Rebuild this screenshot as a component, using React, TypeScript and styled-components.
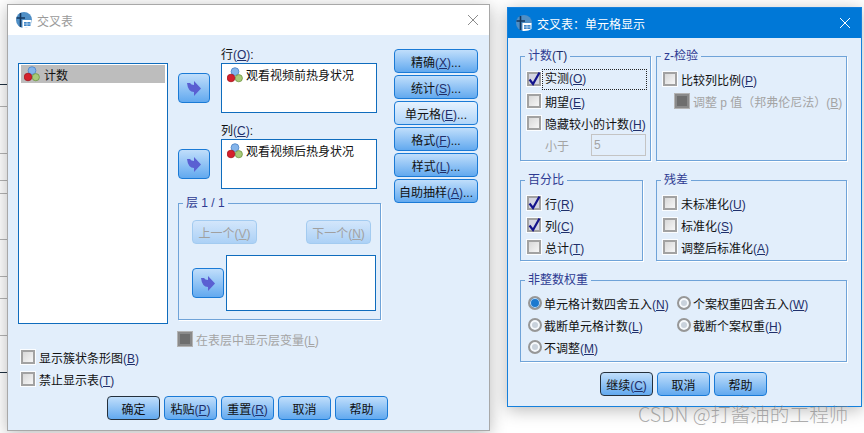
import React from 'react';
import styled, {createGlobalStyle} from 'styled-components';

const Global = createGlobalStyle`
  html, body {
    margin: 0;
    padding: 0;
    background: #fff;
  }
  body {
    font-family: "Liberation Sans", "Noto Sans CJK SC", sans-serif;
    font-size: 12px;
    color: #111;
  }
`;

const PANEL = '#e2eefb';

const Desktop = styled.div`
  position: relative;
  width: 864px;
  height: 433px;
  overflow: hidden;
  background-color: #fff;
`;

// the sheet behind the dialogs, only its left edge shows
const SheetEdge = styled.div`
  position: absolute;
  left: 0;
  top: 0;
  width: 8px;
  height: 433px;
  background-repeat: no-repeat;
  background-size: 8px 1px;
  background-image:
    linear-gradient(#1f3242, #1f3242), linear-gradient(#b4b4b4, #b4b4b4),
    linear-gradient(#b4b4b4, #b4b4b4), linear-gradient(#b4b4b4, #b4b4b4),
    linear-gradient(#b4b4b4, #b4b4b4), linear-gradient(#b4b4b4, #b4b4b4),
    linear-gradient(#b4b4b4, #b4b4b4), linear-gradient(#b4b4b4, #b4b4b4),
    linear-gradient(#b4b4b4, #b4b4b4), linear-gradient(#1f3242, #1f3242);
  background-position:
    0 84px, 0 106px, 0 153px, 0 180px, 0 193px,
    0 239px, 0 276px, 0 298px, 0 335px, 0 372px;
`;

const Dialog = styled.section<{$left: number; $top: number; $w: number; $h: number; $active?: boolean}>`
  position: absolute;
  left: ${p => p.$left}px;
  top: ${p => p.$top}px;
  width: ${p => p.$w}px;
  height: ${p => p.$h}px;
  box-sizing: border-box;
  display: flex;
  flex-direction: column;
  background: ${PANEL};
  border: 1px solid ${p => (p.$active ? '#1580dc' : '#a8a8a8')};
  box-shadow: 0 3px 16px rgba(0, 0, 0, 0.28);
`;

const TitleBar = styled.header<{$active?: boolean}>`
  flex: none;
  height: 30px;
  display: flex;
  align-items: center;
  gap: 5px;
  padding: 0 8px;
  background: ${p => (p.$active ? '#0078d7' : '#fff')};
  color: ${p => (p.$active ? '#fff' : '#9a9a9a')};
`;

const TitleText = styled.span`
  flex: 1;
`;

const Body = styled.div<{$pad: string}>`
  flex: 1;
  display: flex;
  flex-direction: column;
  padding: ${p => p.$pad};
`;

const MainRow = styled.div`
  display: flex;
  gap: 10px;
  align-items: flex-start;
`;

const LeftCol = styled.div`
  width: 150px;
  flex: none;
  padding-top: 16px;
`;

const SourceList = styled.div`
  box-sizing: border-box;
  height: 261px;
  margin-bottom: 22px;
  padding: 1px 2px;
  background: #fff;
  border: 1px solid #0f6cbd;
`;

const ListItem = styled.div`
  height: 18px;
  display: flex;
  align-items: center;
  gap: 4px;
  padding-left: 3px;
  background: #bdbdbd;
`;

const MiddleCol = styled.div`
  width: 203px;
  flex: none;
`;

const TargetRow = styled.div<{$gap?: number}>`
  display: flex;
  gap: 11px;
  margin-top: ${p => p.$gap ?? 0}px;
`;

const TargetField = styled.div`
  width: 156px;
`;

const FieldLabel = styled.div`
  height: 16px;
  line-height: 16px;
`;

const FieldBox = styled.div`
  box-sizing: border-box;
  height: 50px;
  display: flex;
  align-items: flex-start;
  gap: 3px;
  padding: 3px 5px;
  line-height: 18px;
  background: #fff;
  border: 1px solid #0f6cbd;
`;

const ArrowButton = styled.button<{$top?: number}>`
  flex: none;
  box-sizing: border-box;
  width: 32px;
  height: 30px;
  margin-top: ${p => p.$top ?? 0}px;
  padding: 0;
  display: flex;
  align-items: center;
  justify-content: center;
  border: 1px solid #1a7ad6;
  border-radius: 4px;
  background: linear-gradient(#c0defb, #62a9ef);
`;

const Side = styled.div`
  width: 84px;
  flex: none;
  display: flex;
  flex-direction: column;
  gap: 2px;
  margin-left: 3px;
  padding-top: 2px;
`;

const Button = styled.button<{$w?: number; $variant?: 'default' | 'hover' | 'off'}>`
  box-sizing: border-box;
  width: ${p => (p.$w ? `${p.$w}px` : '100%')};
  height: 24px;
  padding: 0;
  font: inherit;
  white-space: nowrap;
  color: ${p => (p.$variant === 'off' ? '#a0a0a0' : '#111')};
  border-radius: 4px;
  border: 1px solid ${p => (p.$variant === 'off' ? '#a3cbf0' : p.$variant === 'default' ? '#24303c' : '#1a7ad6')};
  background: ${p =>
    p.$variant === 'hover'
      ? 'linear-gradient(#e6f2fe, #b0d5f9)'
      : p.$variant === 'off'
        ? 'linear-gradient(#d3e6fb, #acd1f6)'
        : 'linear-gradient(#c0defb, #62a9ef)'};
`;

const Group = styled.div<{$w?: number; $h: number; $pad?: string}>`
  position: relative;
  box-sizing: border-box;
  flex: none;
  width: ${p => (p.$w ? `${p.$w}px` : '100%')};
  height: ${p => p.$h}px;
  padding: ${p => p.$pad ?? '11px 0 0 6px'};
  border: 1px solid #6fa3d8;
  box-shadow: 1px 1px 0 #fff;
`;

const Legend = styled.span`
  position: absolute;
  left: 4px;
  top: -9px;
  height: 16px;
  line-height: 16px;
  padding: 0 3px;
  background: ${PANEL};
  color: #2e3a92;
`;

const LayerGroup = styled(Group)`
  margin-top: 14px;
`;

const NavRow = styled.div`
  display: flex;
  justify-content: space-between;
  width: 179px;
  margin-bottom: 11px;
`;

const LayerRow = styled.div`
  display: flex;
  align-items: center;
  gap: 2px;
`;

const LayerBox = styled.div`
  box-sizing: border-box;
  width: 150px;
  height: 56px;
  background: #fff;
  border: 1px solid #0f6cbd;
`;

const LayerOption = styled.div`
  margin-top: 8px;
`;

const Row = styled.div<{$indent?: number}>`
  height: 22px;
  display: flex;
  align-items: center;
  gap: 4px;
  white-space: nowrap;
  padding-left: ${p => p.$indent ?? 0}px;
`;

const Box = styled.span<{$state?: 'on' | 'off' | 'dead'}>`
  flex: none;
  box-sizing: border-box;
  width: 14px;
  height: 14px;
  display: flex;
  align-items: center;
  justify-content: center;
  border: 2px solid ${p => (p.$state === 'dead' ? '#8a8a8a' : '#a2a2a2')};
  box-shadow: 0 0 0 1px ${p => (p.$state === 'dead' ? '#b4b4b4' : '#fbfdff')};
  background: ${p =>
    p.$state === 'dead'
      ? '#6e6e6e'
      : p.$state === 'on'
        ? '#d4d5e2'
        : 'linear-gradient(135deg, #d8d8d8, #f6f6f6)'};
`;

const RadioDot = styled.span<{$on?: boolean}>`
  flex: none;
  box-sizing: border-box;
  width: 14px;
  height: 14px;
  border-radius: 50%;
  border: 2px solid #979797;
  box-shadow: inset 0 0 0 ${p => (p.$on ? '1px #c8e0f7' : '2px #f6f9fc')};
  background: ${p => (p.$on ? '#1c79cf' : '#c9d2dc')};
`;

const Caption = styled.span<{$off?: boolean; $focus?: boolean}>`
  color: ${p => (p.$off ? '#a4a4a4' : 'inherit')};
  ${p =>
    p.$focus &&
    `
    flex: 1;
    height: 19px;
    line-height: 19px;
    margin: 0 4px 0 -2px;
    padding-left: 2px;
    outline: 1px dotted #222;
  `}
`;

const Mnemonic = styled.span<{$off?: boolean}>`
  color: ${p => (p.$off ? '#a4a4a4' : '#1f2f6a')};
  text-decoration: underline;
  text-underline-offset: 1px;
`;

const Paren = styled.span<{$off?: boolean}>`
  color: ${p => (p.$off ? '#a4a4a4' : '#1f2f6a')};
`;

const SmallSpin = styled.div`
  box-sizing: border-box;
  width: 55px;
  height: 22px;
  margin-left: 18px;
  padding-left: 2px;
  line-height: 20px;
  color: #a4a4a4;
  border: 1px solid #c4c4c4;
`;

const GroupRow = styled.div<{$gap: number}>`
  display: flex;
  gap: ${p => p.$gap}px;
`;

const Spaced = styled.div<{$top: number}>`
  margin-top: ${p => p.$top}px;
`;

const RadioGrid = styled.div`
  display: grid;
  grid-template-columns: 149px 1fr;
`;

const RadioRow = styled.div`
  height: 22px;
  display: flex;
  align-items: center;
  gap: 2px;
  white-space: nowrap;
`;

const ActionRow = styled.div<{$left: number; $top: number}>`
  display: flex;
  gap: 4px;
  margin-top: ${p => p.$top}px;
  margin-left: ${p => p.$left}px;
`;

const Watermark = styled.div`
  position: absolute;
  left: 638px;
  top: 401px;
  font-family: "Noto Sans CJK SC", sans-serif;
  font-size: 19.7px;
  font-weight: 300;
  line-height: 26px;
  white-space: nowrap;
  color: rgba(120, 120, 120, 0.6);
`;

const Arrow = () => (
    <svg width="14" height="15" viewBox="0 0 14 15">
        <path d="M0 2 L3 2 Q4 4 7 4 L7 0 L14 7.5 L7 15 L7 11 Q1 11 0 2 Z" fill="#5a5fd2"/>
    </svg>
);

const Balls = () => (
    <svg width="16" height="16" viewBox="0 0 16 16" style={{flex: 'none'}}>
        <circle cx="8" cy="4.6" r="3.9" fill="#84b4ea" stroke="#4a82c4" strokeWidth="0.8"/>
        <circle cx="11.8" cy="11.2" r="3.6" fill="#a8ca78" stroke="#6f9644" strokeWidth="0.8"/>
        <circle cx="4" cy="11" r="3.8" fill="#d5202c" stroke="#a3141d" strokeWidth="0.8"/>
    </svg>
);

const AppIcon = () => (
    <svg width="16" height="16" viewBox="0 0 16 16" style={{flex: 'none'}}>
        <circle cx="8" cy="8" r="8" fill="#4f8fc6"/>
        <path d="M0.5 6 H9 M4.5 1 V15" stroke="#14375e" strokeWidth="1.6" fill="none"/>
        <path d="M6.5 8 H15.5 V14 Q13 16 8 16 H6.5 Z" fill="#fff"/>
        <path d="M8 10 H14.5 V14 H8 Z" fill="#3f86c8"/>
        <path d="M8 12 H14.5 M11 10 V14" stroke="#cfe3f5" strokeWidth="0.7"/>
    </svg>
);

const CloseIcon = ({color}: {color: string}) => (
    <svg width="12" height="12" viewBox="0 0 12 12" style={{flex: 'none', marginRight: 2}}>
        <path d="M1 1 L11 11 M11 1 L1 11" stroke={color} strokeWidth="1" fill="none"/>
    </svg>
);

const Tick = () => (
    <svg width="16" height="16" viewBox="0 0 16 16" style={{margin: -3, flex: 'none'}}>
        <path d="M3.5 8.5 L7 13 L13.5 1.5" stroke="#14148c" strokeWidth="2.2" fill="none"/>
    </svg>
);

type TextProps = {text: string; mark?: string; tail?: string; off?: boolean; focus?: boolean};

const Text = ({text, mark, tail, off, focus}: TextProps) => (
    <Caption $off={off} $focus={focus}>
        {text}
        {mark && (
            <>
                <Paren $off={off}>(</Paren>
                <Mnemonic $off={off}>{mark}</Mnemonic>
                <Paren $off={off}>)</Paren>
            </>
        )}
        {tail}
    </Caption>
);

const Check = ({state = 'off', indent, ...text}: TextProps & {state?: 'on' | 'off' | 'dead'; indent?: number}) => (
    <Row $indent={indent}>
        <Box $state={state}>{state === 'on' && <Tick/>}</Box>
        <Text {...text}/>
    </Row>
);

const Radio = ({on, ...text}: TextProps & {on?: boolean}) => (
    <RadioRow>
        <RadioDot $on={on}/>
        <Text {...text}/>
    </RadioRow>
);

const App = () => {
    return (
        <Desktop>
            <Global/>
            <SheetEdge/>

            <Dialog $left={7} $top={4} $w={483} $h={427}>
                <TitleBar>
                    <AppIcon/>
                    <TitleText>交叉表</TitleText>
                    <CloseIcon color="#8c8c8c"/>
                </TitleBar>
                <Body $pad="12px 10px 10px">
                    <MainRow>
                        <LeftCol>
                            <SourceList>
                                <ListItem><Balls/>计数</ListItem>
                            </SourceList>
                            <Check text="显示簇状条形图" mark="B" indent={3}/>
                            <Check text="禁止显示表" mark="T" indent={3}/>
                        </LeftCol>

                        <MiddleCol>
                            <TargetRow>
                                <ArrowButton $top={26}><Arrow/></ArrowButton>
                                <TargetField>
                                    <FieldLabel><Text text="行" mark="O" tail=":"/></FieldLabel>
                                    <FieldBox><Balls/>观看视频前热身状况</FieldBox>
                                </TargetField>
                            </TargetRow>
                            <TargetRow $gap={10}>
                                <ArrowButton $top={26}><Arrow/></ArrowButton>
                                <TargetField>
                                    <FieldLabel><Text text="列" mark="C" tail=":"/></FieldLabel>
                                    <FieldBox><Balls/>观看视频后热身状况</FieldBox>
                                </TargetField>
                            </TargetRow>
                            <LayerGroup $h={117} $pad="16px 0 0 13px">
                                <Legend>层 1 / 1</Legend>
                                <NavRow>
                                    <Button $w={65} $variant="off">上一个(<Mnemonic $off>V</Mnemonic>)</Button>
                                    <Button $w={65} $variant="off">下一个(<Mnemonic $off>N</Mnemonic>)</Button>
                                </NavRow>
                                <LayerRow>
                                    <ArrowButton><Arrow/></ArrowButton>
                                    <LayerBox/>
                                </LayerRow>
                            </LayerGroup>
                            <LayerOption>
                                <Check state="dead" off text="在表层中显示层变量" mark="L"/>
                            </LayerOption>
                        </MiddleCol>

                        <Side>
                            <Button><Text text="精确" mark="X" tail="..."/></Button>
                            <Button><Text text="统计" mark="S" tail="..."/></Button>
                            <Button $variant="hover"><Text text="单元格" mark="E" tail="..."/></Button>
                            <Button><Text text="格式" mark="F" tail="..."/></Button>
                            <Button><Text text="样式" mark="L" tail="..."/></Button>
                            <Button><Text text="自助抽样" mark="A" tail="..."/></Button>
                        </Side>
                    </MainRow>
                    <ActionRow $left={89} $top={6}>
                        <Button $w={53} $variant="default">确定</Button>
                        <Button $w={53}><Text text="粘贴" mark="P"/></Button>
                        <Button $w={53}><Text text="重置" mark="R"/></Button>
                        <Button $w={53}>取消</Button>
                        <Button $w={53}>帮助</Button>
                    </ActionRow>
                </Body>
            </Dialog>

            <Dialog $left={507} $top={7} $w={355} $h={400} $active>
                <TitleBar $active>
                    <AppIcon/>
                    <TitleText>交叉表：单元格显示</TitleText>
                    <CloseIcon color="#fff"/>
                </TitleBar>
                <Body $pad="18px 15px 10px 12px">
                    <GroupRow $gap={5}>
                        <Group $w={131} $h={105}>
                            <Legend>计数<Paren>(T)</Paren></Legend>
                            <Check state="on" focus text="实测" mark="O"/>
                            <Check text="期望" mark="E"/>
                            <Check text="隐藏较小的计数" mark="H"/>
                            <Row $indent={18}>
                                <Text off text="小于"/>
                                <SmallSpin>5</SmallSpin>
                            </Row>
                        </Group>
                        <Group $w={191} $h={105}>
                            <Legend>z-检验</Legend>
                            <Check text="比较列比例" mark="P"/>
                            <Check state="dead" off indent={12} text="调整 p 值（邦弗伦尼法）" mark="B"/>
                        </Group>
                    </GroupRow>
                    <Spaced $top={19}>
                        <GroupRow $gap={13}>
                            <Group $w={123} $h={81}>
                                <Legend>百分比</Legend>
                                <Check state="on" text="行" mark="R"/>
                                <Check state="on" text="列" mark="C"/>
                                <Check text="总计" mark="T"/>
                            </Group>
                            <Group $w={191} $h={81}>
                                <Legend>残差</Legend>
                                <Check text="未标准化" mark="U"/>
                                <Check text="标准化" mark="S"/>
                                <Check text="调整后标准化" mark="A"/>
                            </Group>
                        </GroupRow>
                    </Spaced>
                    <Spaced $top={19}>
                        <Group $w={327} $h={82} $pad="11px 0 0 7px">
                            <Legend>非整数权重</Legend>
                            <RadioGrid>
                                <Radio on text="单元格计数四舍五入" mark="N"/>
                                <Radio text="个案权重四舍五入" mark="W"/>
                                <Radio text="截断单元格计数" mark="L"/>
                                <Radio text="截断个案权重" mark="H"/>
                                <Radio text="不调整" mark="M"/>
                            </RadioGrid>
                        </Group>
                    </Spaced>
                    <ActionRow $left={80} $top={10}>
                        <Button $w={53} $variant="default"><Text text="继续" mark="C"/></Button>
                        <Button $w={53}>取消</Button>
                        <Button $w={53}>帮助</Button>
                    </ActionRow>
                </Body>
            </Dialog>

            <Watermark>CSDN @打酱油的工程师</Watermark>
        </Desktop>
    );
};

export default App;
